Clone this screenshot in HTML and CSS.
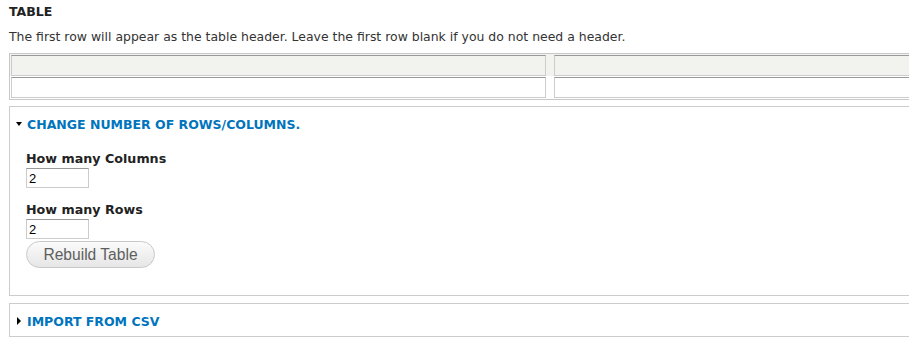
FILE: index.html
```html
<!DOCTYPE html>
<html lang="en">
<head>
  <meta charset="UTF-8" />
  <title>Table field</title>
  <link rel="stylesheet" href="styles.css">
</head>
<body>
  <div class="page">
    <h3 class="field-title">Table</h3>
    <p class="description">The first row will appear as the table header. Leave the first row blank if you do not need a header.</p>

    <table class="tablefield">
      <tr class="head-row">
        <td><input type="text" class="cell"></td>
        <td><input type="text" class="cell"></td>
      </tr>
      <tr>
        <td><input type="text" class="cell"></td>
        <td><input type="text" class="cell"></td>
      </tr>
    </table>

    <fieldset class="collapsible">
      <div class="legend"><span class="arrow down"></span>Change number of rows/columns.</div>
      <div class="fieldset-body">
        <label for="cols">How many Columns</label>
        <input type="text" id="cols" class="small" value="2">
        <label for="rows" class="second">How many Rows</label>
        <input type="text" id="rows" class="small" value="2">
        <button class="btn">Rebuild Table</button>
      </div>
    </fieldset>

    <fieldset class="collapsible collapsed">
      <div class="legend"><span class="arrow right"></span>Import from CSV</div>
    </fieldset>
  </div>
</body>
</html>
```

FILE: styles.css
```css
html, body {
  margin: 0;
  overflow: hidden;
  background: #fff;
}

body {
  font-family: "DejaVu Sans", Verdana, sans-serif;
  font-size: 12.45px;
  color: #333;
}

.page {
  width: 1100px;
  padding: 0 0 0 9px;
}

.field-title {
  margin: 0;
  padding-top: 4px;
  height: 22px;
  font-size: 12.5px;
  font-weight: bold;
  text-transform: uppercase;
  color: #222;
}

.description {
  margin: 0;
  padding-top: 2px;
  height: 25px;
  line-height: 18px;
}

.tablefield {
  border: 1px solid #c8c8c8;
  border-collapse: separate;
  border-spacing: 0;
  width: 1088px;
}

.tablefield td {
  padding: 1px 7px 0 1px;
}

.tablefield tr:last-child td {
  padding-bottom: 1px;
}

.head-row {
  background: #f2f2ee;
}

.cell {
  display: block;
  box-sizing: border-box;
  width: 100%;
  height: 21px;
  margin: 0;
  border: 1px solid #ccc;
  border-top-color: #999;
  background: transparent;
}

.collapsible {
  margin: 6px 0 0 0;
  padding: 0;
  border: 1px solid #ccc;
  width: 1080px;
  box-sizing: border-box;
}

.collapsible + .collapsible {
  margin-top: 7px;
}

.legend {
  display: flex;
  align-items: center;
  padding: 5px 0 0 6px;
  height: 24px;
  font-weight: bold;
  font-size: 12.5px;
  text-transform: uppercase;
  color: #0074bd;
}

.collapsed .legend {
  height: 22px;
  padding-top: 6px;
  padding-bottom: 4px;
}

.arrow {
  width: 0;
  height: 0;
  margin-right: 5px;
}

.arrow.down {
  border-left: 3px solid transparent;
  border-right: 3px solid transparent;
  border-top: 4px solid #000;
}

.arrow.right {
  margin-left: 1px;
  margin-right: 6px;
  border-top: 4px solid transparent;
  border-bottom: 4px solid transparent;
  border-left: 4px solid #000;
}

.fieldset-body {
  padding: 14px 0 27px 16px;
  display: flex;
  flex-direction: column;
  align-items: flex-start;
}

.fieldset-body label {
  font-weight: bold;
  font-size: 12.7px;
  color: #222;
  line-height: 17px;
}

.fieldset-body label.second {
  margin-top: 13px;
}

.small {
  box-sizing: border-box;
  width: 63px;
  height: 20px;
  margin: 1px 0 0 0;
  padding: 0 2px;
  border: 1px solid #ccc;
  border-top-color: #999;
  font-family: "Liberation Sans", Arial, sans-serif;
  font-size: 13px;
  color: #000;
}

.btn {
  margin-top: 2px;
  width: 129px;
  height: 27px;
  border: 1px solid #c8c8c8;
  border-radius: 14px;
  background: linear-gradient(#fbfbfb, #e6e6e6);
  font-family: "Liberation Sans", Arial, sans-serif;
  font-size: 15.6px;
  color: #5e5e5e;
  padding: 0;
}
```
